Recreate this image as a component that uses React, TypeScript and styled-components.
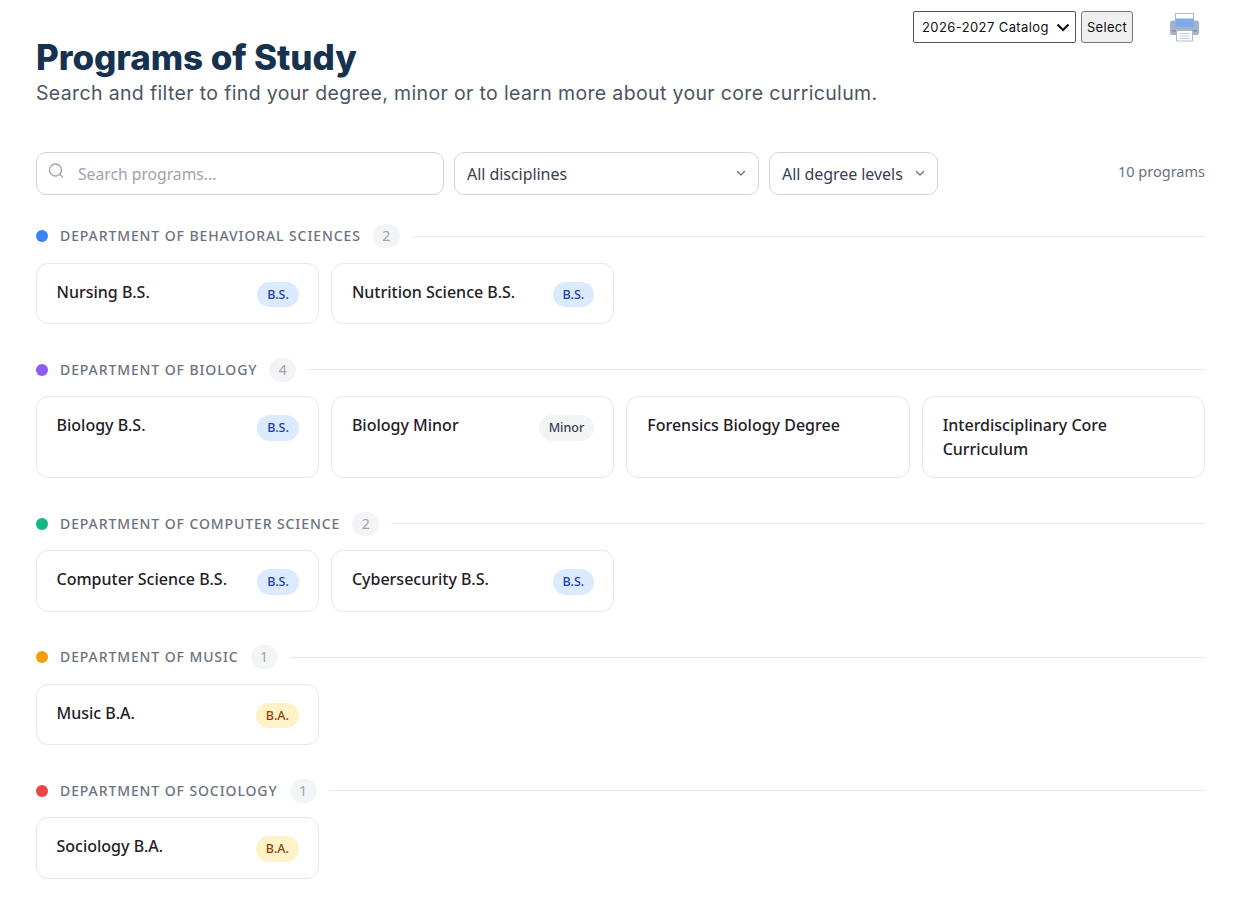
import React from "react";
import styled, { createGlobalStyle } from "styled-components";

const Global = createGlobalStyle`
  html, body { margin: 0; padding: 0; background: #fff; }
  body { font-family: "Noto Sans", "Open Sans", sans-serif; color: #1f2937; }
  * { box-sizing: border-box; }
`;

const Page = styled.div`
  position: relative;
  width: 1234px;
  padding: 0 29px 36px 35.5px;
`;

const CatalogBar = styled.form`
  position: absolute;
  top: 11px;
  left: 913px;
  display: flex;
  align-items: stretch;
  gap: 5px;
  height: 32px;
`;

const CatalogWrap = styled.div`
  position: relative;
  width: 163px;
  height: 32px;
`;

const CatalogSelect = styled.select`
  width: 100%;
  height: 100%;
  padding: 0 24px 0 8px;
  appearance: none;
  font-family: "Inter", sans-serif;
  font-size: 13px;
  letter-spacing: 0.4px;
  color: #111;
  background: #fff;
  border: 1px solid #555;
  border-radius: 2px;
`;

const CatalogChevron = styled.svg`
  position: absolute;
  left: 143px;
  top: 12px;
  pointer-events: none;
`;

const CatalogButton = styled.button`
  width: 52px;
  height: 32px;
  padding: 0;
  font-family: "Inter", sans-serif;
  font-size: 13px;
  letter-spacing: 0.3px;
  color: #111;
  background: #efefef;
  border: 1px solid #767676;
  border-radius: 3px;
`;

const PrintLink = styled.a`
  position: absolute;
  top: 12px;
  left: 1169px;
  display: block;
  width: 31px;
  height: 30px;
`;

const Header = styled.header`
  padding-top: 36px;
  height: 152px;
`;

const Title = styled.h1`
  margin: 0 0 0 0.5px;
  font-family: "Inter", sans-serif;
  font-size: 35px;
  line-height: 42px;
  font-weight: 800;
  letter-spacing: -0.08px;
  color: #17324f;
`;

const Subtitle = styled.p`
  margin: 1px 0 0 0.5px;
  font-family: "Inter", sans-serif;
  font-size: 19.5px;
  line-height: 28px;
  font-weight: 400;
  letter-spacing: 0.35px;
  color: #4b5563;
  white-space: nowrap;
`;

const Toolbar = styled.div`
  display: flex;
  align-items: flex-start;
  gap: 10px;
  height: 43px;
  margin: 0 0 29.5px 0.5px;
`;

const SearchBox = styled.label`
  position: relative;
  display: block;
  width: 408px;
  height: 43px;
`;

const SearchIconWrap = styled.span`
  position: absolute;
  left: 12px;
  top: 11px;
  display: flex;
  color: #9ca3af;
`;

const SearchInput = styled.input`
  width: 100%;
  height: 100%;
  padding: 0 12px 0 41px;
  font-family: inherit;
  font-size: 15.7px;
  color: #374151;
  border: 1px solid #d1d5db;
  border-radius: 10px;
  outline: none;
  &::placeholder { color: #9ca3af; opacity: 1; }
`;

const FilterWrap = styled.div<{ $w: number }>`
  position: relative;
  width: ${(p) => p.$w}px;
  height: 43px;
`;

const FilterSelect = styled.select`
  width: 100%;
  height: 100%;
  padding: 0 24px 0 12px;
  appearance: none;
  font-family: inherit;
  font-size: 16px;
  letter-spacing: -0.05px;
  color: #374151;
  background: #fff;
  border: 1px solid #d1d5db;
  border-radius: 10px;
`;

const Chevron = styled.svg`
  position: absolute;
  right: 13px;
  top: 17px;
  pointer-events: none;
`;

const Count = styled.div`
  margin-left: auto;
  padding-top: 9px;
  font-size: 14.5px;
  line-height: 20px;
  color: #6b7280;
`;

const Section = styled.section`
  margin-bottom: 34px;
`;

const SectionHead = styled.div`
  display: flex;
  align-items: center;
  height: 23px;
  margin-bottom: 15px;
`;

const Dot = styled.span<{ $c: string }>`
  width: 12px;
  height: 12px;
  border-radius: 50%;
  background: ${(p) => p.$c};
  margin: 0 12px 0 0.5px;
  flex: none;
`;

const DeptName = styled.h2`
  margin: 0 12px 0 0;
  font-size: 14px;
  line-height: 20px;
  font-weight: 500;
  letter-spacing: 0.9px;
  color: #6b7280;
  text-transform: uppercase;
  white-space: nowrap;
`;

const DeptCount = styled.span`
  flex: none;
  width: 27px;
  height: 24px;
  margin-right: 12px;
  border-radius: 12px;
  background: #f3f4f6;
  color: #9ca3af;
  font-size: 14px;
  line-height: 24px;
  font-weight: 400;
  text-align: center;
`;

const Rule = styled.span`
  flex: 1;
  height: 1px;
  background: #e5e7eb;
`;

const Cards = styled.div`
  display: grid;
  grid-template-columns: repeat(4, 1fr);
  gap: 12px;
`;

const Card = styled.a`
  display: flex;
  align-items: flex-start;
  justify-content: space-between;
  gap: 12px;
  padding: 16px 19px 16px 20px;
  border: 1px solid #e5e7eb;
  border-radius: 12px;
  background: #fff;
`;

const CardTitle = styled.span`
  font-size: 16px;
  line-height: 24px;
  font-weight: 500;
  color: #1f2028;
`;

const Badge = styled.span<{ $bg: string; $fg: string }>`
  flex: none;
  margin-top: 2px;
  padding: 0 10px;
  height: 25.5px;
  border-radius: 13px;
  background: ${(p) => p.$bg};
  color: ${(p) => p.$fg};
  font-size: 12.5px;
  line-height: 25.5px;
  font-weight: 500;
`;

const badgeStyles: Record<string, { bg: string; fg: string }> = {
  "B.S.": { bg: "#dbeafe", fg: "#1e40af" },
  "B.A.": { bg: "#fef3c7", fg: "#92400e" },
  Minor: { bg: "#f3f4f6", fg: "#374151" },
};

const departments: { name: string; color: string; programs: { title: string; badge?: string }[] }[] = [
  {
    name: "Department of Behavioral Sciences",
    color: "#3b82f6",
    programs: [
      { title: "Nursing B.S.", badge: "B.S." },
      { title: "Nutrition Science B.S.", badge: "B.S." },
    ],
  },
  {
    name: "Department of Biology",
    color: "#8b5cf6",
    programs: [
      { title: "Biology B.S.", badge: "B.S." },
      { title: "Biology Minor", badge: "Minor" },
      { title: "Forensics Biology Degree" },
      { title: "Interdisciplinary Core Curriculum" },
    ],
  },
  {
    name: "Department of Computer Science",
    color: "#10b981",
    programs: [
      { title: "Computer Science B.S.", badge: "B.S." },
      { title: "Cybersecurity B.S.", badge: "B.S." },
    ],
  },
  {
    name: "Department of Music",
    color: "#f59e0b",
    programs: [{ title: "Music B.A.", badge: "B.A." }],
  },
  {
    name: "Department of Sociology",
    color: "#ef4444",
    programs: [{ title: "Sociology B.A.", badge: "B.A." }],
  },
];

const PrinterIcon = () => (
  <svg width="31" height="30" viewBox="0 0 31 30" fill="none">
    <path d="M6.500 1.500h18v10h-18z" fill="#fff" stroke="#aebacb" strokeWidth="1.200" />
    <path d="M3.500 8.500h24a2.500 2.500 0 0 1 2.500 2.500v10a2 2 0 0 1-2 2H3a2 2 0 0 1-2-2V11a2.500 2.500 0 0 1 2.500-2.500z" fill="#a4b3c8" />
    <path d="M6.500 6.500h18v8.500h-18z" fill="#80a9ea" />
    <path d="M3 18h25v1.500H3z" fill="#7f90aa" />
    <path d="M7.500 18.500h16V29h-16z" fill="#fff" stroke="#aebacb" strokeWidth="1" />
    <path d="M10.500 21.500h10M10.500 24h10M10.500 26.500h10" stroke="#c3cedc" strokeWidth="1" />
  </svg>
);

const ChevronIcon = () => (
  <Chevron width="10" height="10" viewBox="0 0 10 10" fill="none">
    <path d="M1.500 2.500 5 6 8.500 2.500" stroke="#6b7280" strokeWidth="1.300" strokeLinecap="round" strokeLinejoin="round" />
  </Chevron>
);

export default function App() {
  return (
    <Page>
      <Global />
      <CatalogBar>
        <CatalogWrap>
          <CatalogSelect defaultValue="2026">
            <option value="2026">2026-2027 Catalog</option>
          </CatalogSelect>
          <CatalogChevron width="14" height="9" viewBox="0 0 14 9" fill="none">
            <path d="M1.500 1.500 7 7l5.500-5.500" stroke="#111" strokeWidth="2.200" />
          </CatalogChevron>
        </CatalogWrap>
        <CatalogButton type="button">Select</CatalogButton>
      </CatalogBar>
      <PrintLink aria-label="Print">
        <PrinterIcon />
      </PrintLink>
      <Header>
        <Title>Programs of Study</Title>
        <Subtitle>Search and filter to find your degree, minor or to learn more about your core curriculum.</Subtitle>
      </Header>
      <Toolbar>
        <SearchBox>
          <SearchIconWrap>
            <svg width="16" height="16" viewBox="0 0 16 16" fill="none" stroke="currentColor" strokeWidth="1.300" strokeLinecap="round">
              <circle cx="7.500" cy="7" r="6" />
              <path d="M12 11.500l2.500 2.500" />
            </svg>
          </SearchIconWrap>
          <SearchInput placeholder="Search programs..." />
        </SearchBox>
        <FilterWrap $w={305}>
          <FilterSelect defaultValue="all">
            <option value="all">All disciplines</option>
          </FilterSelect>
          <ChevronIcon />
        </FilterWrap>
        <FilterWrap $w={169}>
          <FilterSelect defaultValue="all">
            <option value="all">All degree levels</option>
          </FilterSelect>
          <ChevronIcon />
        </FilterWrap>
        <Count>10 programs</Count>
      </Toolbar>
      {departments.map((d) => (
        <Section key={d.name}>
          <SectionHead>
            <Dot $c={d.color} />
            <DeptName>{d.name}</DeptName>
            <DeptCount>{d.programs.length}</DeptCount>
            <Rule />
          </SectionHead>
          <Cards>
            {d.programs.map((p) => (
              <Card key={p.title}>
                <CardTitle>{p.title}</CardTitle>
                {p.badge && (
                  <Badge $bg={badgeStyles[p.badge].bg} $fg={badgeStyles[p.badge].fg}>
                    {p.badge}
                  </Badge>
                )}
              </Card>
            ))}
          </Cards>
        </Section>
      ))}
    </Page>
  );
}
